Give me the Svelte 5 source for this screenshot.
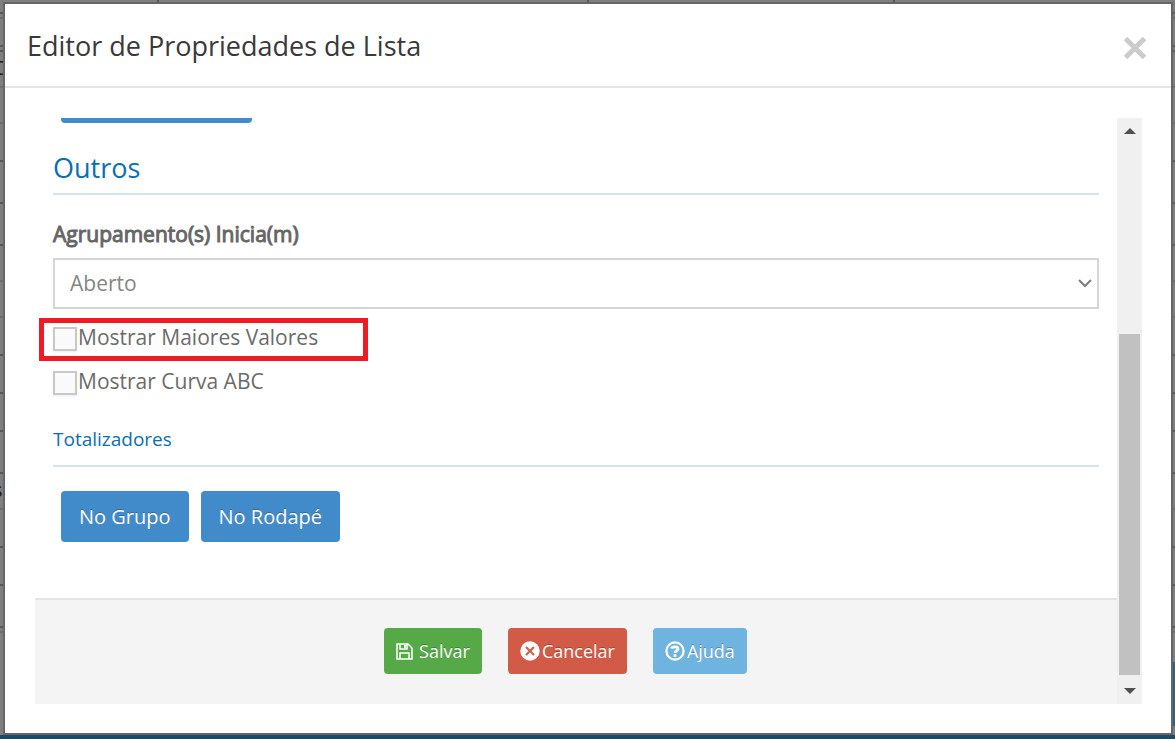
<script lang="ts">
	type Line = { height: number; text?: string; strong?: boolean };

	// form rows visible behind the dialog
	const lines: Line[] = [
		{ height: 14, strong: true },
		{ height: 5 },
		{ height: 28, strong: true },
		{ height: 5, strong: true },
		{ height: 36, text: 'C' },
		{ height: 36 },
		{ height: 38, strong: true },
		{ height: 42, strong: true },
		{ height: 42, strong: true },
		{ height: 36 },
		{ height: 36 },
		{ height: 38, strong: true },
		{ height: 38, strong: true },
		{ height: 38, strong: true },
		{ height: 42, strong: true },
		{ height: 36, text: 's' },
		{ height: 38, strong: true },
		{ height: 38, strong: true },
		{ height: 42, strong: true },
		{ height: 5 }
	];

	let open = $state(true);
	let group = $state('Aberto');
	let showTop = $state(false);
	let showCurve = $state(false);
</script>

<div class="page">
	<div class="backdrop" aria-hidden="true">
		<div class="tabs"><i></i><i></i><i></i><i></i></div>
		{#each lines as line}
			<div class="line" class:strong={line.strong} style={`height:${line.height}px`}>
				{line.text ?? ''}
			</div>
		{/each}
		<div class="side-block"></div>
		<div class="page-footer"></div>
	</div>

	{#if open}
		<div class="modal" role="dialog" aria-labelledby="modal-title">
			<header>
				<h1 id="modal-title">Editor de Propriedades de Lista</h1>
				<button class="close" type="button" aria-label="Fechar" onclick={() => (open = false)}>
					<svg viewBox="0 0 24 24" width="24" height="24">
						<path d="M2.5 2.5 L21.5 21.5 M21.5 2.5 L2.5 21.5" />
					</svg>
				</button>
			</header>

			<div class="modal-body">
				<form onsubmit={(e) => e.preventDefault()}>
					<div class="fields">
						<div class="cut">
							<button class="btn primary wide" type="button" aria-label="Adicionar"></button>
						</div>

						<h2>Outros</h2>

						<label class="field-label" for="group-start">Agrupamento(s) Inicia(m)</label>
						<div class="select">
							<select id="group-start" bind:value={group}>
								<option>Aberto</option>
								<option>Fechado</option>
							</select>
							<svg viewBox="0 0 14 9" width="14" height="9" aria-hidden="true">
								<path d="M1 1 L7 7 L13 1" />
							</svg>
						</div>

						<label class="check marked">
							<input type="checkbox" bind:checked={showTop} />
							<span>Mostrar Maiores Valores</span>
						</label>
						<label class="check">
							<input type="checkbox" bind:checked={showCurve} />
							<span>Mostrar Curva ABC</span>
						</label>

						<h3>Totalizadores</h3>
						<div class="totals">
							<button class="btn primary" type="button">No Grupo</button>
							<button class="btn primary" type="button">No Rodapé</button>
						</div>
					</div>

					<footer>
						<button class="btn save" type="submit">
							<svg viewBox="0 0 17 17" width="17" height="17" aria-hidden="true">
								<path d="M1 1 H12 L16 5 V16 H1 Z M4 1 V6 H11 V1 M4 16 V10 H13 V16" />
								<path d="M8 2 H10 V5 H8 Z" fill="#fff" stroke="none" />
							</svg>
							Salvar
						</button>
						<button class="btn cancel" type="button" onclick={() => (open = false)}>
							<svg viewBox="0 0 20 20" width="20" height="20" aria-hidden="true">
								<circle cx="10" cy="10" r="9.7" fill="#fff" stroke="none" />
								<path class="cross" d="M6 6 L14 14 M14 6 L6 14" />
							</svg>
							Cancelar
						</button>
						<button class="btn help" type="button">
							<svg viewBox="0 0 20 20" width="20" height="20" aria-hidden="true">
								<circle cx="10" cy="10" r="8.6" stroke-width="2.2" />
								<path d="M6.6 7.6 C7.2 5.4 12.8 5 13 7.9 C13 9.7 10 9.6 10 12" stroke-width="2.8" />
								<path d="M8.6 13.2 H11.4 V15.8 H8.6 Z" fill="#fff" stroke="none" />
							</svg>
							Ajuda
						</button>
					</footer>
				</form>

				<div class="scrollbar" aria-hidden="true">
					<svg viewBox="0 0 12 6" width="12" height="6"><path d="M0 6 L6 0 L12 6 Z" /></svg>
					<div class="track"><div class="thumb"></div></div>
					<svg viewBox="0 0 12 6" width="12" height="6"><path d="M0 0 L6 6 L12 0 Z" /></svg>
				</div>
			</div>
		</div>
	{/if}
</div>

<style>
	:global(body) {
		margin: 0;
		background: #7f7f7f;
		font-family: 'Open Sans', 'Noto Sans', sans-serif;
	}

	.page {
		position: relative;
		box-sizing: border-box;
		min-height: 100vh;
		padding: 2px 2px 4px 3px;
		overflow: hidden;
	}

	.backdrop {
		position: absolute;
		inset: 0;
		overflow: hidden;
	}

	.tabs {
		display: grid;
		grid-template-columns: 157fr 430fr 306fr 282fr;
		height: 3px;
		margin-bottom: -3px;
	}

	.tabs i + i {
		border-left: 2px solid #555;
	}

	.line {
		box-sizing: border-box;
		border-bottom: 2px solid #6d6d6d;
		color: #1c1c1c;
		font-size: 20px;
		line-height: 32px;
		text-indent: -7px;
	}

	.line.strong {
		border-color: #595959;
	}

	.side-block {
		position: absolute;
		right: 0;
		bottom: 13px;
		width: 20px;
		height: 64px;
		background: #34607f;
	}

	.page-footer {
		position: absolute;
		inset: auto 0 0;
		height: 4px;
		background: #204a63;
	}

	.modal {
		position: relative;
		border: 2px solid #666;
		background: #fff;
	}

	header {
		display: flex;
		align-items: center;
		justify-content: space-between;
		height: 82px;
		padding: 0 24px 0 22px;
		border-bottom: 2px solid #e5e5e5;
	}

	h1 {
		margin: 2px 0 0;
		color: #393939;
		font-size: 27px;
		font-weight: 400;
		line-height: 36px;
	}

	.close {
		display: flex;
		margin-top: 6px;
		padding: 0;
		border: 0;
		background: none;
		cursor: pointer;
	}

	.close path {
		stroke: #ccc;
		stroke-width: 5;
	}

	.modal-body {
		display: flex;
		margin: 30px 29px 29px 30px;
	}

	form {
		flex: 1;
	}

	.fields {
		padding: 0 18px;
	}

	.cut {
		display: flex;
		align-items: flex-end;
		height: 5px;
		padding-left: 8px;
		overflow: hidden;
	}

	h2,
	h3 {
		margin: 0;
		border-bottom: 2px solid #d5e3ef;
		color: #0a6eb4;
		font-weight: 400;
	}

	h2 {
		padding: 25px 0 5px;
		font-size: 27px;
		line-height: 40px;
	}

	h3 {
		padding: 21px 0 12px;
		font-size: 19px;
		line-height: 28px;
	}

	.field-label {
		display: block;
		padding: 23px 0 8px;
		color: #666;
		font-size: 21px;
		line-height: 32px;
		-webkit-text-stroke: 1px #666;
	}

	.select {
		position: relative;
		margin-bottom: 9px;
	}

	select {
		display: block;
		appearance: none;
		box-sizing: border-box;
		width: 100%;
		height: 51px;
		padding: 0 15px 2px;
		border: 2px solid #d5d5d5;
		border-radius: 0;
		background: #fff;
		color: #858585;
		font: inherit;
		font-size: 21px;
	}

	.select svg {
		position: absolute;
		top: 21px;
		right: 7px;
		fill: none;
		stroke: #7d7d7d;
		stroke-width: 2;
		pointer-events: none;
	}

	.check {
		display: flex;
		gap: 1px;
		box-sizing: border-box;
		width: fit-content;
		height: 43px;
		padding-top: 10px;
		color: #6b6b6b;
		font-size: 21px;
		line-height: 20px;
	}

	.check input {
		appearance: none;
		box-sizing: border-box;
		width: 24px;
		height: 24px;
		margin: 0;
		border: 2px solid #c8c8c8;
		background: #fafafa;
		box-shadow: 0 1px 2px rgba(0, 0, 0, 0.08);
	}

	.check input:checked {
		background: #428bca;
	}

	.check.marked {
		margin-left: -14px;
		padding: 4px 45px 0 9px;
		border: 5px solid #ed1c24;
	}

	.totals {
		display: flex;
		gap: 12px;
		padding: 24px 8px 56px;
	}

	.btn {
		display: flex;
		align-items: center;
		justify-content: center;
		border: 0;
		border-radius: 4px;
		color: #fff;
		font-family: inherit;
		font-size: 18px;
		text-shadow: 0 -1px 0 rgba(0, 0, 0, 0.25);
		cursor: pointer;
	}

	.btn.primary {
		flex: none;
		height: 51px;
		padding: 0 18px;
		background: #428bca;
		font-size: 20px;
	}

	.btn.wide {
		width: 191px;
	}

	footer {
		display: flex;
		justify-content: center;
		gap: 26px;
		padding: 28px 21px 30px 0;
		border-top: 2px solid #e4e4e4;
		background: #f4f4f4;
	}

	footer .btn {
		height: 46px;
		padding: 0 12px;
		gap: 2px;
	}

	footer .btn.save {
		gap: 6px;
		background: #55a946;
	}

	footer .cancel {
		background: #d15b47;
	}

	footer .help {
		background: #6fb3e0;
	}

	footer svg {
		fill: none;
		stroke: #fff;
		stroke-width: 2;
	}

	footer .save svg {
		stroke-width: 1.5;
	}

	footer .cross {
		stroke: #d15b47;
	}

	.scrollbar {
		display: flex;
		flex-direction: column;
		align-items: center;
		width: 25px;
		padding: 10px 0;
		box-sizing: border-box;
		background: #f0f0f0;
	}

	.scrollbar path {
		fill: #505050;
	}

	.track {
		display: flex;
		flex: 1;
		align-items: flex-end;
		margin: 13px 0;
	}

	.thumb {
		width: 21px;
		height: 64.5%;
		background: #c1c1c1;
	}
</style>
